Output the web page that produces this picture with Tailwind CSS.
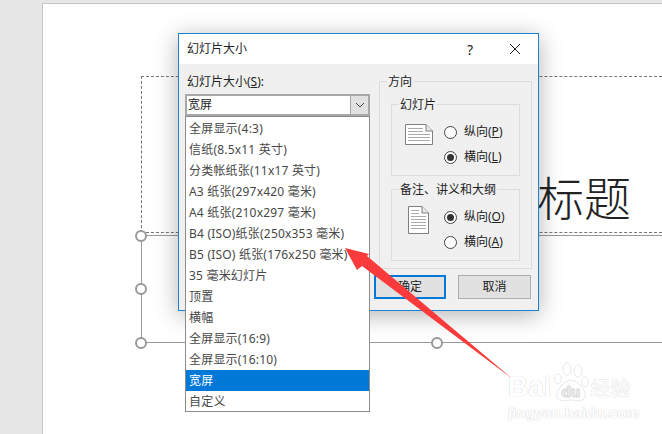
<!DOCTYPE html>
<html lang="zh-CN">
<head>
  <meta charset="UTF-8" />
  <title>幻灯片大小</title>
  <script src="https://cdn.jsdelivr.net/npm/@tailwindcss/browser@4"></script>
</head>
<body class="bg-[#e6e6e6] font-['Noto_Sans','Noto_Sans_CJK_SC',sans-serif] text-[12px] text-[#222]">
  <div class="relative w-[662px] h-[434px] overflow-hidden">
    <!-- slide -->
    <div class="absolute left-[42px] top-[3px] w-[620px] h-[431px] bg-white border-l border-t border-[#c6c6c6]"></div>
    <div class="absolute left-[141px] top-[76px] w-[521px] h-[157px] border border-dashed border-[#777] border-r-0"></div>
    <div class="absolute left-[537px] top-[167px] text-[47px] leading-[62px] font-light text-[#222]">标题</div>
    <div class="absolute left-[141px] top-[235px] w-[521px] h-[108px] border border-[#999] border-r-0"></div>
    <span class="absolute left-[135px] top-[230px] size-[12px] rounded-full bg-white border-2 border-[#999]"></span>
    <span class="absolute left-[135px] top-[283px] size-[12px] rounded-full bg-white border-2 border-[#999]"></span>
    <span class="absolute left-[135px] top-[337px] size-[12px] rounded-full bg-white border-2 border-[#999]"></span>
    <span class="absolute left-[431px] top-[337px] size-[12px] rounded-full bg-white border-2 border-[#999]"></span>

    <!-- dialog -->
    <div class="absolute left-[178px] top-[33px] w-[361px] h-[278px] bg-[#f0f0f0] border border-[#1883d7] shadow-[0_4px_22px_rgba(0,0,0,0.3)]">
      <div class="h-[30px] bg-white flex items-center pl-[8px]">
        <span class="flex-1">幻灯片大小</span>
        <span class="w-[20px] text-[14px] text-center mr-[29px]">?</span>
        <svg class="mr-[17px]" width="12" height="12" viewBox="0 0 12 12"><path d="M1 1 L11 11 M11 1 L1 11" stroke="#222" stroke-width="1" fill="none"/></svg>
      </div>
      <div class="flex justify-between pl-[6px] pr-[6px]">
        <div class="w-[185px] pt-[8px]">
          <div class="leading-[20px] pl-[2px]">幻灯片大小(<u>S</u>):</div>
          <div class="mt-[2px] h-[22px] flex border-2 border-[#a8a8a8] bg-white">
            <span class="flex-1 pl-[1px] leading-[18px]">宽屏</span>
            <span class="w-[18px] bg-[#e1e1e1] border-l border-[#a8a8a8] flex items-center justify-center">
              <svg width="10" height="6" viewBox="0 0 10 6"><path d="M1 1 L5 5 L9 1" stroke="#444" fill="none"/></svg>
            </span>
          </div>
        </div>
        <div class="w-[153px] pt-[9px]">
          <fieldset class="h-[196px] border border-[#dcdcdc] pl-[11px] pr-[11px]">
            <legend class="-ml-[4px] px-[1px] leading-[17px]">方向</legend>
            <fieldset class="h-[80px] border border-[#dcdcdc] mt-[6px]">
              <legend class="ml-[7px] px-[1px] leading-[17px]">幻灯片</legend>
              <div class="flex items-start pl-[13px] gap-[11px]">
                <svg class="mt-[11px]" width="28" height="21" viewBox="0 0 28 21"><path d="M.5.5H21L27.5 7V20.500H.5Z" fill="#fff" stroke="#808080"/><path d="M21 .5V7H27.500" fill="#e8e8e8" stroke="#808080"/><path d="M3 4.500H18M3 7.500H18M3 10.500H25M3 13.500H25M3 16.500H25" stroke="#aaa"/></svg>
                <div class="flex flex-col gap-[9px] mt-[11px]">
                  <div class="flex items-center gap-[7px] leading-[16px]"><span class="size-[13px] rounded-full bg-white border border-[#444]"></span><span>纵向(<u>P</u>)</span></div>
                  <div class="flex items-center gap-[7px] leading-[16px]"><span class="size-[13px] rounded-full bg-white border border-[#444] flex items-center justify-center"><span class="size-[7px] rounded-full bg-[#333]"></span></span><span>横向(<u>L</u>)</span></div>
                </div>
              </div>
            </fieldset>
            <fieldset class="h-[80px] border border-[#dcdcdc] mt-[5px]">
              <legend class="ml-[7px] px-[1px] leading-[17px]">备注、讲义和大纲</legend>
              <div class="flex items-start pl-[16px] gap-[15px]">
                <svg class="mt-[8px]" width="21" height="28" viewBox="0 0 21 28"><path d="M.5.5H14L20.500 7V27.500H.5Z" fill="#fff" stroke="#808080"/><path d="M14 .5V7H20.500" fill="#e8e8e8" stroke="#808080"/><path d="M3 4.500H11M3 7.500H11M3 10.500H18M3 13.500H18M3 16.500H18M3 19.500H18M3 22.500H18" stroke="#aaa"/></svg>
                <div class="flex flex-col gap-[9px] mt-[11px]">
                  <div class="flex items-center gap-[7px] leading-[16px]"><span class="size-[13px] rounded-full bg-white border border-[#444] flex items-center justify-center"><span class="size-[7px] rounded-full bg-[#333]"></span></span><span>纵向(<u>O</u>)</span></div>
                  <div class="flex items-center gap-[7px] leading-[16px]"><span class="size-[13px] rounded-full bg-white border border-[#444]"></span><span>横向(<u>A</u>)</span></div>
                </div>
              </div>
            </fieldset>
          </fieldset>
          <div class="flex justify-between mt-[6px] -ml-[5px] mr-[1px]">
            <button class="w-[72px] h-[24px] bg-[#e1e1e1] border-2 border-[#0078d7]">确定</button>
            <button class="w-[73px] h-[24px] bg-[#e1e1e1] border border-[#adadad]">取消</button>
          </div>
        </div>
      </div>
      <!-- opened dropdown list -->
      <ul class="absolute left-[6px] top-[82px] w-[185px] h-[296px] bg-white border border-[#8c8c8c] text-[#484848] leading-[21px] tracking-[0.2px] pt-[1px]">
        <li class="pl-[3px] h-[21px]">全屏显示(4:3)</li>
        <li class="pl-[3px] h-[21px]">信纸(8.5x11 英寸)</li>
        <li class="pl-[3px] h-[21px]">分类帐纸张(11x17 英寸)</li>
        <li class="pl-[3px] h-[21px]">A3 纸张(297x420 毫米)</li>
        <li class="pl-[3px] h-[21px]">A4 纸张(210x297 毫米)</li>
        <li class="pl-[3px] h-[21px]">B4 (ISO)纸张(250x353 毫米)</li>
        <li class="pl-[3px] h-[21px]">B5 (ISO) 纸张(176x250 毫米)</li>
        <li class="pl-[3px] h-[21px]">35 毫米幻灯片</li>
        <li class="pl-[3px] h-[21px]">顶置</li>
        <li class="pl-[3px] h-[21px]">横幅</li>
        <li class="pl-[3px] h-[21px]">全屏显示(16:9)</li>
        <li class="pl-[3px] h-[21px]">全屏显示(16:10)</li>
        <li class="pl-[3px] h-[21px] bg-[#0078d7] text-white">宽屏</li>
        <li class="pl-[3px] h-[21px]">自定义</li>
      </ul>
    </div>

    <!-- red annotation arrow -->
    <svg class="absolute left-0 top-0" width="662" height="434" viewBox="0 0 662 434"><path d="M345 248 L369 254 L367 256 L514 380 L362 266 L357 270 Z" fill="#fb3b3b"/></svg>

    <!-- watermark -->
    <div class="absolute left-[508px] top-[362px] w-[125px] text-white [text-shadow:0_0_1px_#d4d4d4,0_0_1px_#d4d4d4] font-['Liberation_Sans',sans-serif]">
      <div class="flex items-end h-[41px] whitespace-nowrap">
        <span class="text-[28px] leading-[32px] font-bold shrink-0">Bai</span>
        <svg class="ml-[1px] shrink-0" width="36" height="41" viewBox="0 0 36 41" fill="#fff" stroke="#e8e8e8"><ellipse cx="5" cy="17" rx="3.500" ry="5"/><ellipse cx="14" cy="7" rx="4" ry="6"/><ellipse cx="25" cy="9" rx="4" ry="6"/><ellipse cx="32" cy="20" rx="3.500" ry="5"/><path d="M18 18C24 18 34 28 32 35C30 41 22 38 18 38C14 38 6 41 4 35C2 28 12 18 18 18Z"/><text x="18" y="35" text-anchor="middle" font-size="15" font-weight="700" fill="#fff" stroke="#ddd" stroke-width=".5">du</text></svg>
        <span class="ml-[2px] text-[20px] leading-[30px] shrink-0 font-['Noto_Sans_CJK_SC',sans-serif]">经验</span>
      </div>
      <div class="text-[15px] leading-[18px] font-bold mt-[1px] whitespace-nowrap">jingyan.baidu.com</div>
    </div>
  </div>
</body>
</html>
